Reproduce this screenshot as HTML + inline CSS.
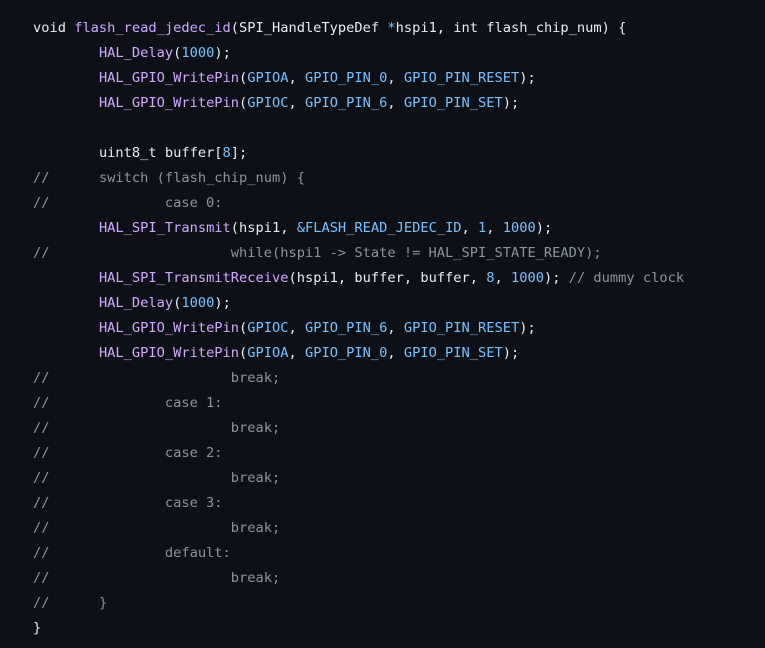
<!DOCTYPE html>
<html><head><style>
html,body{margin:0;padding:0;background:#0d1117;}
body{width:765px;height:648px;overflow:hidden;}
pre{margin:0;padding:16px 0 0 33px;font-family:"DejaVu Sans Mono","Liberation Mono",monospace;font-size:13.7px;line-height:25px;color:#e6edf3;tab-size:8;-moz-tab-size:8;}
.f{color:#d2a8ff}.c{color:#79c0ff}.m{color:#8b949e}
</style></head><body><pre>void <span class="f">flash_read_jedec_id</span>(SPI_HandleTypeDef <span class="c">*</span>hspi1, int flash_chip_num) {
	<span class="f">HAL_Delay</span>(<span class="c">1000</span>);
	<span class="f">HAL_GPIO_WritePin</span>(<span class="c">GPIOA</span>, <span class="c">GPIO_PIN_0</span>, <span class="c">GPIO_PIN_RESET</span>);
	<span class="f">HAL_GPIO_WritePin</span>(<span class="c">GPIOC</span>, <span class="c">GPIO_PIN_6</span>, <span class="c">GPIO_PIN_SET</span>);

	uint8_t buffer[<span class="c">8</span>];
<span class="m">//	switch (flash_chip_num) {</span>
<span class="m">//		case 0:</span>
	<span class="f">HAL_SPI_Transmit</span>(hspi1, <span class="c">&amp;FLASH_READ_JEDEC_ID</span>, <span class="c">1</span>, <span class="c">1000</span>);
<span class="m">//			while(hspi1 -&gt; State != HAL_SPI_STATE_READY);</span>
	<span class="f">HAL_SPI_TransmitReceive</span>(hspi1, buffer, buffer, <span class="c">8</span>, <span class="c">1000</span>); <span class="m">// dummy clock</span>
	<span class="f">HAL_Delay</span>(<span class="c">1000</span>);
	<span class="f">HAL_GPIO_WritePin</span>(<span class="c">GPIOC</span>, <span class="c">GPIO_PIN_6</span>, <span class="c">GPIO_PIN_RESET</span>);
	<span class="f">HAL_GPIO_WritePin</span>(<span class="c">GPIOA</span>, <span class="c">GPIO_PIN_0</span>, <span class="c">GPIO_PIN_SET</span>);
<span class="m">//			break;</span>
<span class="m">//		case 1:</span>
<span class="m">//			break;</span>
<span class="m">//		case 2:</span>
<span class="m">//			break;</span>
<span class="m">//		case 3:</span>
<span class="m">//			break;</span>
<span class="m">//		default:</span>
<span class="m">//			break;</span>
<span class="m">//	}</span>
}</pre></body></html>
